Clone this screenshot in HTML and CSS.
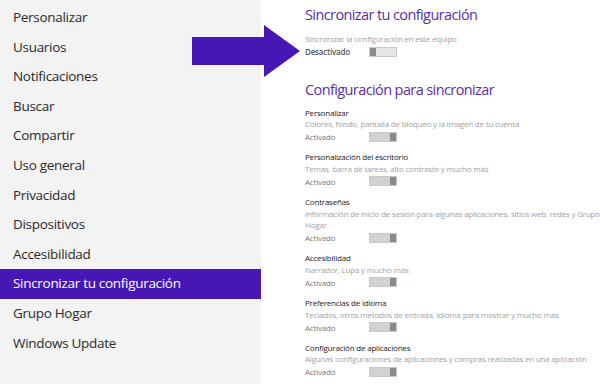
FILE: index.html
```html
<!DOCTYPE html>
<html lang="es">
<head>
  <meta charset="UTF-8">
  <title>Sincronizar tu configuración</title>
  <link rel="stylesheet" href="styles.css">
</head>
<body>

<div class="screen">
  <ul class="menu">
    <li>Personalizar</li>
    <li>Usuarios</li>
    <li>Notificaciones</li>
    <li>Buscar</li>
    <li>Compartir</li>
    <li>Uso general</li>
    <li>Privacidad</li>
    <li>Dispositivos</li>
    <li>Accesibilidad</li>
    <li class="active">Sincronizar tu configuración</li>
    <li>Grupo Hogar</li>
    <li>Windows Update</li>
  </ul>

  <div class="content">
    <h1>Sincronizar tu configuración</h1>
    <div class="desc">Sincronizar la configuración en este equipo</div>
    <div class="switch-row">
      <span class="state strong">Desactivado</span>
      <span class="toggle off"><span class="thumb"></span></span>
    </div>

    <h2>Configuración para sincronizar</h2>

    <div class="item">
      <div class="name">Personalizar</div>
      <div class="desc">Colores, fondo, pantalla de bloqueo y la imagen de tu cuenta</div>
      <div class="switch-row"><span class="state">Activado</span><span class="toggle on"><span class="thumb"></span></span></div>
    </div>
    <div class="item">
      <div class="name">Personalización del escritorio</div>
      <div class="desc">Temas, barra de tareas, alto contraste y mucho más</div>
      <div class="switch-row"><span class="state">Activado</span><span class="toggle on"><span class="thumb"></span></span></div>
    </div>
    <div class="item">
      <div class="name">Contraseñas</div>
      <div class="desc">Información de inicio de sesión para algunas aplicaciones, sitios web, redes y Grupo<br>Hogar</div>
      <div class="switch-row"><span class="state">Activado</span><span class="toggle on"><span class="thumb"></span></span></div>
    </div>
    <div class="item">
      <div class="name">Accesibilidad</div>
      <div class="desc">Narrador, Lupa y mucho más</div>
      <div class="switch-row"><span class="state">Activado</span><span class="toggle on"><span class="thumb"></span></span></div>
    </div>
    <div class="item">
      <div class="name">Preferencias de idioma</div>
      <div class="desc">Teclados, otros métodos de entrada, idioma para mostrar y mucho más</div>
      <div class="switch-row"><span class="state">Activado</span><span class="toggle on"><span class="thumb"></span></span></div>
    </div>
    <div class="item">
      <div class="name">Configuración de aplicaciones</div>
      <div class="desc">Algunas configuraciones de aplicaciones y compras realizadas en una aplicación</div>
      <div class="switch-row"><span class="state">Activado</span><span class="toggle on"><span class="thumb"></span></span></div>
    </div>
  </div>

  <svg class="arrow" width="110" height="56" viewBox="0 0 110 56">
    <polygon points="0,12 72,12 72,0 108,26 72,52 72,40 0,40" fill="#4617b4"/>
  </svg>
</div>

</body>
</html>
```

FILE: styles.css
```css
body {
  margin: 0;
  font-family: "Open Sans", "Noto Sans", sans-serif;
  background: #fff;
}

.screen {
  position: relative;
  display: flex;
  width: 600px;
  height: 384px;
  overflow: hidden;
}

.menu {
  list-style: none;
  margin: 0;
  padding: 3px 0 0;
  width: 261px;
  flex-shrink: 0;
  background: #f3f3f3;
}

.menu li {
  height: 29.6px;
  line-height: 29px;
  padding-left: 13px;
  font-size: 13.5px;
  letter-spacing: -0.3px;
  color: #2a2a2a;
}

.menu li.active {
  background: #4617b4;
  color: #fff;
}

.content {
  padding: 3px 0 0 44px;
}

h1, h2 {
  margin: 0;
  font-weight: 400;
  font-size: 14.5px;
  letter-spacing: -0.6px;
  line-height: 24px;
  color: #5a2ea6;
}

h1 {
  margin-bottom: 6px;
}

h2 {
  margin: 19.5px 0 5px;
}

.desc, .name, .state {
  font-size: 8px;
  letter-spacing: -0.2px;
}

.desc {
  line-height: 11.5px;
  color: #a2a2a2;
  white-space: nowrap;
}

.name {
  line-height: 11.5px;
  color: #222;
}

.item {
  margin-bottom: 8.2px;
}

.switch-row {
  display: flex;
  align-items: center;
  height: 13px;
  margin-top: 0.75px;
}

.item .switch-row {
  margin-top: 0.5px;
}

.state {
  width: 64px;
  color: #777;
}

.state.strong {
  color: #555;
  font-weight: 600;
}

.toggle {
  display: flex;
  width: 26px;
  height: 8px;
  border: 1px solid #c8c8c8;
  background: #e6e6e6;
}

.toggle .thumb {
  width: 6px;
  height: 100%;
  background: #8a8a8a;
}

.toggle.on {
  justify-content: flex-end;
  background: #d2d2d2;
}

.arrow {
  position: absolute;
  left: 192px;
  top: 25px;
}
```
